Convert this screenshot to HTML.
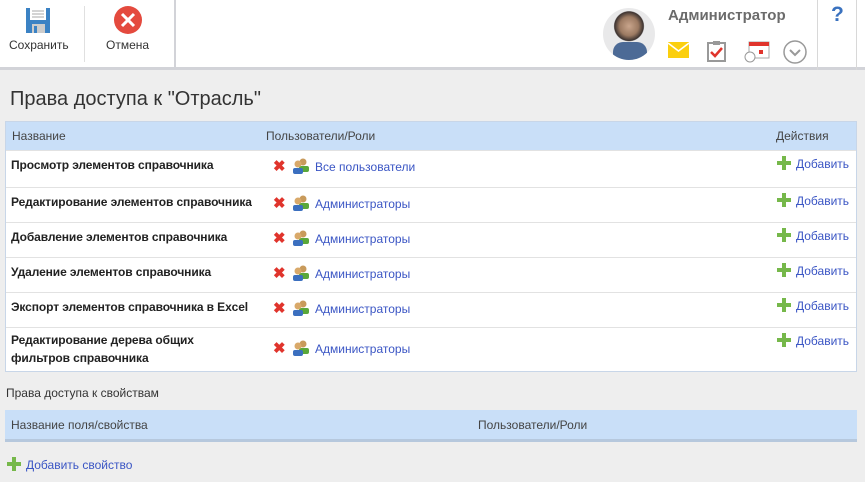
<!DOCTYPE html>
<html><head><meta charset="utf-8"><style>
*{margin:0;padding:0;box-sizing:border-box}
body{width:865px;height:482px;background:#eeeeee;font-family:"Liberation Sans",sans-serif;position:relative;overflow:hidden;color:#333}
.hdr{position:absolute;left:0;top:0;width:865px;height:70px;background:#fff;border-bottom:3px solid #d2d3d8}
.abs{position:absolute}
.lbl{font-size:12px;color:#333}
.tbl{position:absolute;left:5px;top:121px;width:852px;height:251px;background:#fff;border:1px solid #c8d6e8}
.th{position:absolute;left:0;top:0;width:850px;height:28px;background:#c9dff8;font-size:12px;color:#444}
.row{position:absolute;left:0;width:850px;border-top:1px solid #e2e2e2}
.nm{position:absolute;left:5px;top:5px;font-size:12px;font-weight:bold;color:#222;line-height:18px;white-space:nowrap;letter-spacing:-0.1px}
.x{position:absolute;left:267px;color:#e0342c;font-size:15px;font-weight:bold}
.usr{position:absolute;left:286px}
.lnk{position:absolute;left:309px;font-size:12px;color:#3a55c4}
.add{position:absolute;left:771px;font-size:12px;color:#3a55c4}
.plus{display:inline-block;width:14px;height:14px;position:relative;vertical-align:-2px;margin-right:5px}
.plus:before{content:"";position:absolute;left:5px;top:0;width:4px;height:14px;background:#76b84a}
.plus:after{content:"";position:absolute;left:0;top:5px;width:14px;height:4px;background:#76b84a}
</style></head><body>
<div class="hdr">
 <svg class="abs" style="left:26px;top:8px" width="24" height="25"><rect width="24" height="25" fill="#3b82c4"/><rect x="4" y="0" width="16" height="12" fill="#fff"/><line x1="6" y1="3" x2="18" y2="3" stroke="#aaa"/><line x1="6" y1="6" x2="18" y2="6" stroke="#aaa"/><line x1="6" y1="9" x2="18" y2="9" stroke="#aaa"/><rect x="6" y="16" width="13" height="9" fill="#ccc"/><rect x="8" y="18" width="3" height="7" fill="#3b82c4"/></svg>
 <div class="abs lbl" style="left:9px;top:38px">Сохранить</div>
 <div class="abs" style="left:84px;top:6px;width:1px;height:56px;background:#e0e0e0"></div>
 <svg class="abs" style="left:114px;top:6px" width="28" height="28"><circle cx="14" cy="14" r="14" fill="#e44a3e"/><path d="M8 8L20 20M20 8L8 20" stroke="#fff" stroke-width="3"/></svg>
 <div class="abs lbl" style="left:106px;top:38px">Отмена</div>
 <div class="abs" style="left:174px;top:0;width:2px;height:70px;background:#d2d3d8"></div>
 <div class="abs" style="left:603px;top:8px;width:52px;height:52px;border-radius:50%;background:radial-gradient(circle at 50% 35%,#c9a58c 0,#9c7a62 22%,#3b3230 34%,#e9e9ea 36%);overflow:hidden"><div style="position:absolute;left:10px;top:34px;width:34px;height:22px;background:#4c6a96;border-radius:10px 10px 0 0"></div></div>
 <div class="abs" style="left:668px;top:7px;font-size:15px;font-weight:bold;color:#6b6b6b">Администратор</div>
 <svg class="abs" style="left:668px;top:42px" width="21" height="16"><rect width="21" height="16" fill="#fbcf0e"/><path d="M0 1L10.5 9L21 1" stroke="#fff" stroke-width="1.5" fill="none"/></svg>
 <svg class="abs" style="left:707px;top:40px" width="19" height="22"><rect x="1" y="3" width="17" height="18" fill="#fff" stroke="#999" stroke-width="2"/><rect x="6" y="1" width="7" height="4" fill="#999"/><path d="M4 12L8 16L15 8" stroke="#e0342c" stroke-width="2.5" fill="none"/></svg>
 <svg class="abs" style="left:744px;top:41px" width="26" height="22"><rect x="5" y="1" width="20" height="16" fill="#fff" stroke="#aaa"/><rect x="5" y="1" width="20" height="4" fill="#e0342c"/><rect x="15" y="9" width="4" height="4" fill="#e0342c"/><circle cx="6" cy="16" r="5" fill="#fff" stroke="#999"/></svg>
 <svg class="abs" style="left:783px;top:40px" width="24" height="24"><circle cx="12" cy="12" r="11" fill="none" stroke="#999" stroke-width="1.5"/><path d="M7 10L12 15L17 10" stroke="#999" stroke-width="2" fill="none"/></svg>
 <div class="abs" style="left:817px;top:0;width:1px;height:70px;background:#d8d8d8"></div>
 <div class="abs" style="left:831px;top:3px;font-size:21px;font-weight:bold;color:#3a72bf">?</div>
 <div class="abs" style="left:856px;top:0;width:1px;height:70px;background:#d8d8d8"></div>
</div>
<div class="abs" style="left:10px;top:88px;font-size:20px;color:#333">Права доступа к "Отрасль"</div>
<div class="tbl">
 <div class="th"><span class="abs" style="left:6px;top:7px">Название</span><span class="abs" style="left:260px;top:7px">Пользователи/Роли</span><span class="abs" style="left:770px;top:7px">Действия</span></div>
 <div class="row" style="top:28px;height:37px"><div class="nm">Просмотр элементов справочника</div><span class="x" style="top:6px">✖</span><svg class="usr" style="top:7px" width="18" height="16"><circle cx="11" cy="4" r="3.5" fill="#c89a5b"/><rect x="7" y="8" width="10" height="6" rx="2" fill="#5aa83a"/><circle cx="6" cy="6" r="3.5" fill="#d9a96a"/><rect x="1" y="10" width="10" height="6" rx="2" fill="#3b6fbf"/></svg><span class="lnk" style="top:9px">Все пользователи</span><span class="add" style="top:5px"><i class="plus"></i>Добавить</span></div>
 <div class="row" style="top:65px;height:35px"><div class="nm">Редактирование элементов справочника</div><span class="x" style="top:6px">✖</span><svg class="usr" style="top:7px" width="18" height="16"><circle cx="11" cy="4" r="3.5" fill="#c89a5b"/><rect x="7" y="8" width="10" height="6" rx="2" fill="#5aa83a"/><circle cx="6" cy="6" r="3.5" fill="#d9a96a"/><rect x="1" y="10" width="10" height="6" rx="2" fill="#3b6fbf"/></svg><span class="lnk" style="top:9px">Администраторы</span><span class="add" style="top:5px"><i class="plus"></i>Добавить</span></div>
 <div class="row" style="top:100px;height:35px"><div class="nm">Добавление элементов справочника</div><span class="x" style="top:6px">✖</span><svg class="usr" style="top:7px" width="18" height="16"><circle cx="11" cy="4" r="3.5" fill="#c89a5b"/><rect x="7" y="8" width="10" height="6" rx="2" fill="#5aa83a"/><circle cx="6" cy="6" r="3.5" fill="#d9a96a"/><rect x="1" y="10" width="10" height="6" rx="2" fill="#3b6fbf"/></svg><span class="lnk" style="top:9px">Администраторы</span><span class="add" style="top:5px"><i class="plus"></i>Добавить</span></div>
 <div class="row" style="top:135px;height:35px"><div class="nm">Удаление элементов справочника</div><span class="x" style="top:6px">✖</span><svg class="usr" style="top:7px" width="18" height="16"><circle cx="11" cy="4" r="3.5" fill="#c89a5b"/><rect x="7" y="8" width="10" height="6" rx="2" fill="#5aa83a"/><circle cx="6" cy="6" r="3.5" fill="#d9a96a"/><rect x="1" y="10" width="10" height="6" rx="2" fill="#3b6fbf"/></svg><span class="lnk" style="top:9px">Администраторы</span><span class="add" style="top:5px"><i class="plus"></i>Добавить</span></div>
 <div class="row" style="top:170px;height:35px"><div class="nm">Экспорт элементов справочника в Excel</div><span class="x" style="top:6px">✖</span><svg class="usr" style="top:7px" width="18" height="16"><circle cx="11" cy="4" r="3.5" fill="#c89a5b"/><rect x="7" y="8" width="10" height="6" rx="2" fill="#5aa83a"/><circle cx="6" cy="6" r="3.5" fill="#d9a96a"/><rect x="1" y="10" width="10" height="6" rx="2" fill="#3b6fbf"/></svg><span class="lnk" style="top:9px">Администраторы</span><span class="add" style="top:5px"><i class="plus"></i>Добавить</span></div>
 <div class="row" style="top:205px;height:44px"><div class="nm" style="top:3px">Редактирование дерева общих<br>фильтров справочника</div><span class="x" style="top:11px">✖</span><svg class="usr" style="top:12px" width="18" height="16"><circle cx="11" cy="4" r="3.5" fill="#c89a5b"/><rect x="7" y="8" width="10" height="6" rx="2" fill="#5aa83a"/><circle cx="6" cy="6" r="3.5" fill="#d9a96a"/><rect x="1" y="10" width="10" height="6" rx="2" fill="#3b6fbf"/></svg><span class="lnk" style="top:14px">Администраторы</span><span class="add" style="top:5px"><i class="plus"></i>Добавить</span></div>
</div>
<div class="abs lbl" style="left:6px;top:386px">Права доступа к свойствам</div>
<div class="abs" style="left:5px;top:410px;width:852px;height:32px;background:#c9dff8;border-bottom:3px solid #b6c8dd;font-size:12px;color:#444"><span class="abs" style="left:6px;top:8px">Название поля/свойства</span><span class="abs" style="left:473px;top:8px">Пользователи/Роли</span></div>
<div class="abs" style="left:7px;top:457px;font-size:12px;color:#3a55c4"><i class="plus"></i>Добавить свойство</div>
</body></html>
